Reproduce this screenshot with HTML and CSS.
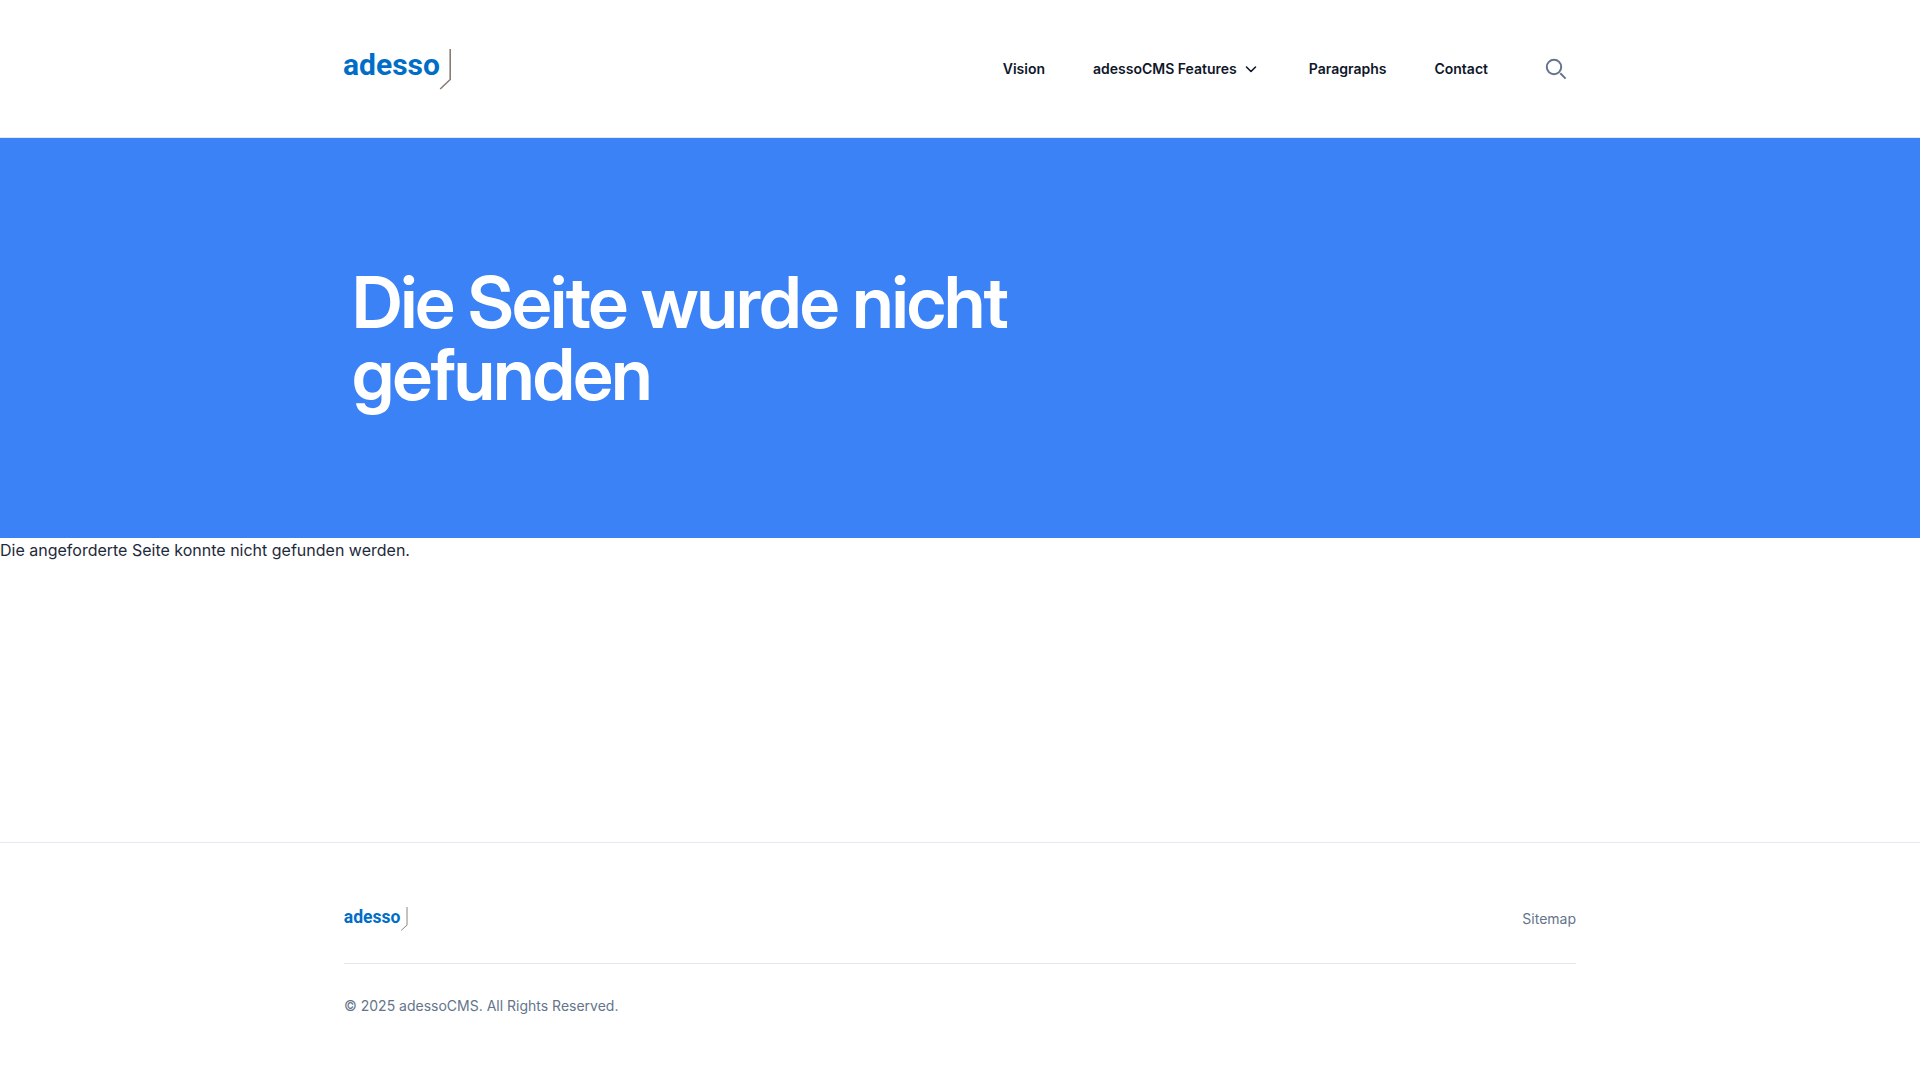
FILE: index.html
```html
<!DOCTYPE html>
<html lang="de">
<head>
<meta charset="utf-8">
<meta name="viewport" content="width=device-width, initial-scale=1">
<title>Die Seite wurde nicht gefunden | adessoCMS</title>
<link rel="stylesheet" href="styles.css">
</head>
<body>
<header class="site-header">
  <div class="container header-row">
    <a class="logo" href="#" aria-label="adesso">
      <svg viewBox="0 0 108 42" aria-hidden="true">
        <text class="logo-word" x="-1" y="27">adesso</text>
        <path class="logo-mark" d="M106.200 1V31.500L96.200 41"/>
      </svg>
    </a>
    <nav class="main-nav" aria-label="Main">
      <a href="#">Vision</a>
      <button type="button" class="nav-toggle">adessoCMS Features
        <svg class="chevron" viewBox="0 0 20 20" aria-hidden="true"><path d="M5.500 8L10 12.500L14.500 8"/></svg>
      </button>
      <a href="#">Paragraphs</a>
      <a href="#">Contact</a>
      <button type="button" class="search" aria-label="Search">
        <svg viewBox="0 0 24 24" aria-hidden="true"><circle cx="10" cy="10" r="7.200"/><path d="M16.300 16.300L21.600 21.600"/></svg>
      </button>
    </nav>
  </div>
</header>
<main>
  <section class="hero">
    <div class="container">
      <h1>Die Seite wurde nicht gefunden</h1>
    </div>
  </section>
  <p class="message">Die angeforderte Seite konnte nicht gefunden werden.</p>
</main>
<footer class="site-footer">
  <div class="container">
    <div class="footer-row">
      <a class="logo logo-small" href="#" aria-label="adesso">
        <svg viewBox="0 0 108 41" aria-hidden="true">
          <text class="logo-word" x="-1" y="27">adesso</text>
          <path class="logo-mark" d="M107 0V31L97 40"/>
        </svg>
      </a>
      <a class="footer-link" href="#">Sitemap</a>
    </div>
    <p class="copyright">© 2025 adessoCMS. All Rights Reserved.</p>
  </div>
</footer>
</body>
</html>
```
FILE: styles.css
```css
*, *::before, *::after { box-sizing: border-box; }

body {
  margin: 0;
  min-height: 100vh;
  background: #fff;
  color: #1e293b;
  font-family: Inter, "Liberation Sans", sans-serif;
  font-size: 16px;
  line-height: 24px;
}

h1, p { margin: 0; }
a { color: inherit; text-decoration: none; }
svg { display: block; }

button {
  padding: 0;
  border: 0;
  background: none;
  color: inherit;
  font: inherit;
  cursor: pointer;
}

.container {
  width: 100%;
  max-width: 1280px;
  margin: 0 auto;
  padding: 0 24px;
}

.site-header {
  padding: 48px 0 47px;
  border-bottom: 1px solid #e2e8f0;
}

.header-row,
.main-nav,
.nav-toggle,
.footer-row {
  display: flex;
  align-items: center;
}

.header-row,
.footer-row { justify-content: space-between; }

.logo svg { width: 108px; height: 42px; overflow: visible; }
.logo-small svg { width: 64px; height: 24px; }

.logo-word {
  fill: #006ec7;
  font-family: Roboto, "Liberation Sans", sans-serif;
  font-size: 30px;
  font-weight: 700;
}

.logo-mark {
  fill: none;
  stroke: #887d75;
  stroke-width: 1.6;
}

.main-nav {
  gap: 48px;
  color: #0f172a;
  font-size: 14px;
  font-weight: 600;
  line-height: 20px;
}

.nav-toggle { gap: 4px; }

.chevron {
  width: 20px;
  height: 20px;
  fill: none;
  stroke: currentColor;
  stroke-width: 1.6;
  stroke-linecap: round;
  stroke-linejoin: round;
}

.search {
  padding: 8px;
  color: #64748b;
}

.search svg {
  width: 24px;
  height: 24px;
  fill: none;
  stroke: currentColor;
  stroke-width: 2;
}

.hero {
  display: flex;
  align-items: center;
  min-height: 400px;
  background: #3b82f6;
  color: #fff;
}

.hero h1 {
  max-width: 800px;
  padding: 0 8px;
  font-family: "Inter Display", Inter, "Liberation Sans", sans-serif;
  font-size: 72px;
  font-weight: 600;
  line-height: 72px;
  letter-spacing: -0.025em;
}

.site-footer {
  margin-top: 280px;
  padding: 64px 0;
  border-top: 1px solid #e2e8f0;
}

.footer-row {
  padding-bottom: 32px;
  border-bottom: 1px solid #e2e8f0;
}

.footer-link,
.copyright {
  color: #64748b;
  font-size: 14px;
  line-height: 20px;
}

.copyright { padding-top: 32px; }
```
